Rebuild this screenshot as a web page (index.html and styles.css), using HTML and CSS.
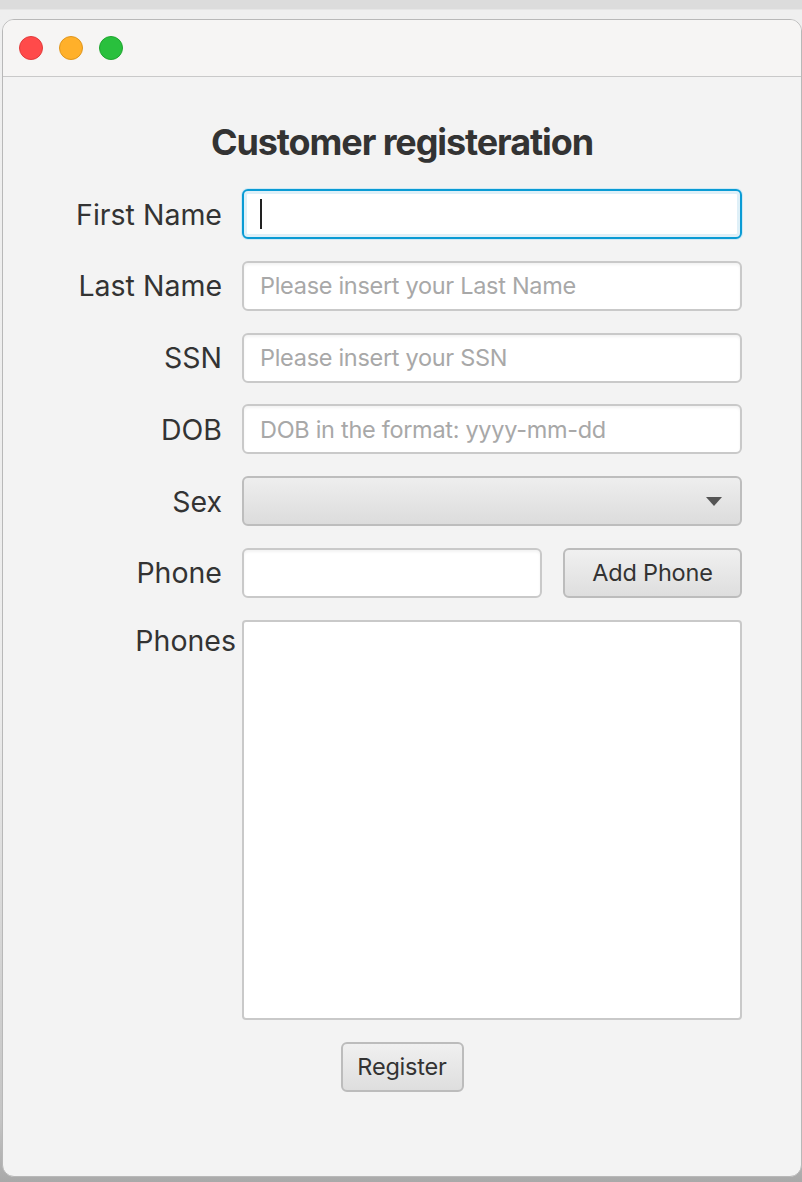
FILE: index.html
```html
<!DOCTYPE html>
<html>
<head>
<meta charset="utf-8">
<link rel="stylesheet" href="styles.css">
</head>
<body>
<div class="topstrip"></div>
<div class="window">
  <div class="titlebar">
    <span class="light red"></span>
    <span class="light yellow"></span>
    <span class="light green"></span>
  </div>
  <div class="content">
    <h1 class="title">Customer registeration</h1>
    <div class="form">
      <label class="lbl">First Name</label>
      <div class="field focused"><span class="caret"></span></div>

      <label class="lbl">Last Name</label>
      <div class="field"><span class="ph">Please insert your Last Name</span></div>

      <label class="lbl">SSN</label>
      <div class="field"><span class="ph">Please insert your SSN</span></div>

      <label class="lbl">DOB</label>
      <div class="field"><span class="ph">DOB in the format: yyyy-mm-dd</span></div>

      <label class="lbl">Sex</label>
      <div class="combo"><span class="arrow"></span></div>

      <label class="lbl">Phone</label>
      <div class="phone-row">
        <div class="field phone-field"></div>
        <div class="btn add-btn">Add Phone</div>
      </div>

      <label class="lbl lbl-top">Phones</label>
      <div class="textarea"></div>
    </div>
    <div class="actions">
      <div class="btn reg-btn">Register</div>
    </div>
  </div>
</div>
</body>
</html>
```
FILE: styles.css
```css
html, body {
  margin: 0;
  padding: 0;
}
body {
  width: 802px;
  height: 1182px;
  overflow: hidden;
  background: linear-gradient(to bottom, #dcdcdc 0, #dcdcdc 10px, #efefef 10px, #ececec 700px, #c4c4c4 1120px, #a9a9a9 100%);
  font-family: Inter, "Noto Sans", "Liberation Sans", sans-serif;
  color: #333;
}
.topstrip {
  height: 10px;
  border-bottom: 1px solid #e6e6e6;
  box-sizing: border-box;
}
.window {
  margin: 9px 0 0 2px;
  width: 800px;
  height: 1158px;
  box-sizing: border-box;
  border: 1px solid #b8b8b8;
  border-radius: 12px;
  background: #f3f3f3;
  overflow: hidden;
  display: flex;
  flex-direction: column;
}
.titlebar {
  height: 57px;
  flex: none;
  box-sizing: border-box;
  background: #f6f5f4;
  border-bottom: 1px solid #c9c9c9;
  display: flex;
  align-items: center;
  gap: 16px;
  padding: 0 0 0 16px;
}
.light {
  width: 24px;
  height: 24px;
  border-radius: 50%;
  box-sizing: border-box;
}
.red { background: #ff4a4a; border: 1px solid #e23b3b; }
.yellow { background: #ffb02a; border: 1px solid #e0961d; }
.green { background: #29c03d; border: 1px solid #1fa52f; }

.content {
  flex: 1;
  display: flex;
  flex-direction: column;
  align-items: center;
}
.title {
  margin: 43px 0 0 0;
  font-size: 36px;
  font-weight: 700;
  letter-spacing: -1.1px;
  line-height: 44px;
  color: #333;
  padding-left: 0;
}
.form {
  margin-top: 25px;
  display: grid;
  grid-template-columns: 146px 500px;
  column-gap: 20px;
  row-gap: 21.8px;
  margin-left: 14px;
}
.lbl {
  font-size: 28.5px;
  letter-spacing: 0;
  text-align: right;
  align-self: center;
  white-space: nowrap;
  color: #333;
}
.lbl-top {
  align-self: start;
  margin-right: -14px;
  margin-top: 3px;
}
.field {
  height: 50px;
  box-sizing: border-box;
  background: #fff;
  border: 2px solid #c9c9c9;
  border-radius: 6px;
  display: flex;
  align-items: center;
  padding-left: 16px;
  box-shadow: inset 0 2px 3px rgba(0,0,0,0.05);
}
.field.focused {
  border: 2px solid #0a9bd4;
  box-shadow: 0 0 0 1px #cfe9f5, inset 0 0 0 3px #dff0f8;
}
.caret {
  width: 2px;
  height: 30px;
  background: #222;
}
.ph {
  font-size: 23.5px;
  color: #a8a8a8;
  letter-spacing: -0.3px;
  white-space: nowrap;
}
.combo {
  height: 50px;
  box-sizing: border-box;
  border: 2px solid #bdbdbd;
  border-radius: 6px;
  background: linear-gradient(to bottom, #eeeeee, #dcdcdc);
  display: flex;
  align-items: center;
  justify-content: flex-end;
  padding-right: 18px;
}
.arrow {
  width: 0;
  height: 0;
  border-left: 8px solid transparent;
  border-right: 8px solid transparent;
  border-top: 9px solid #555;
}
.phone-row {
  display: flex;
  justify-content: space-between;
}
.phone-field {
  width: 300px;
}
.btn {
  height: 50px;
  box-sizing: border-box;
  border: 2px solid #bcbcbc;
  border-radius: 6px;
  background: linear-gradient(to bottom, #f0f0f0, #dedede);
  display: flex;
  align-items: center;
  justify-content: center;
  font-size: 23.5px;
  color: #333;
  letter-spacing: -0.2px;
}
.add-btn {
  width: 179px;
}
.textarea {
  height: 400px;
  box-sizing: border-box;
  background: #fff;
  border: 2px solid #c9c9c9;
  border-radius: 4px;
}
.actions {
  margin-top: 22px;
  display: flex;
  justify-content: center;
}
.reg-btn {
  width: 123px;
}
```
